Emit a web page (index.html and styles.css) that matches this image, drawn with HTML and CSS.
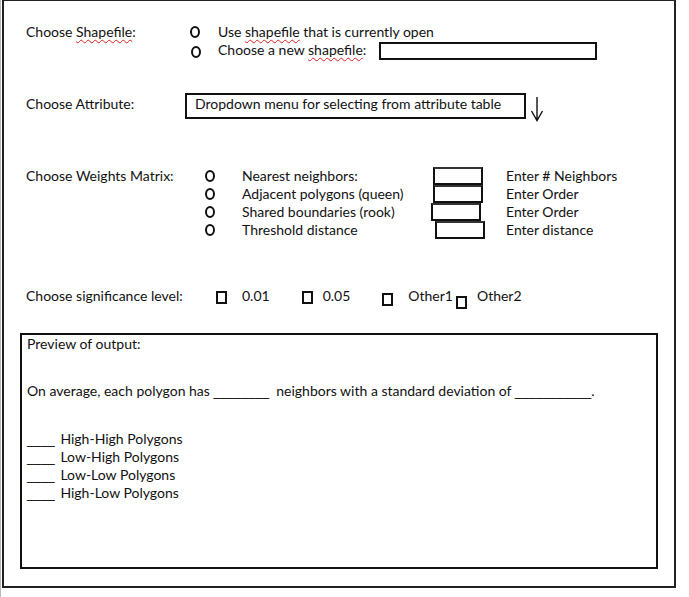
FILE: index.html
```html
<!DOCTYPE html>
<html>
<head>
<meta charset="utf-8">
<link rel="stylesheet" href="styles.css">
</head>
<body>
<div class="frame">
  <section class="shape">
    <div class="label">Choose <span class="sp">Shapefile</span>:</div>
    <div class="options">
      <div class="opt"><span class="radio"></span><span class="otext">Use <span class="sp">shapefile</span> that is currently open</span></div>
      <div class="opt opt2"><span class="radio"></span><span class="otext">Choose a new <span class="sp">shapefile</span>:</span><span class="field"></span></div>
    </div>
  </section>

  <section class="attr">
    <div class="label">Choose Attribute:</div>
    <div class="dropdown">Dropdown menu for selecting from attribute table</div>
    <svg class="arrow" width="14" height="26" viewBox="0 0 14 26"><path d="M7 1 V24 M1.5 15 L7 24.5 L12.5 15" fill="none" stroke="#111" stroke-width="1.4"/></svg>
  </section>

  <section class="weights">
    <div class="label">Choose Weights Matrix:</div>
    <span class="radio"></span><span>Nearest neighbors:</span><span class="box"></span><span>Enter # Neighbors</span>
    <div></div>
    <span class="radio"></span><span>Adjacent polygons (queen)</span><span class="box b2"></span><span>Enter Order</span>
    <div></div>
    <span class="radio"></span><span>Shared boundaries (rook)</span><span class="box b3"></span><span>Enter Order</span>
    <div></div>
    <span class="radio"></span><span>Threshold distance</span><span class="box b4"></span><span>Enter distance</span>
  </section>

  <section class="sig">
    <div class="label">Choose significance level:</div>
    <span class="check c1"></span><span class="val v1">0.01</span>
    <span class="check c2"></span><span class="val v2">0.05</span>
    <span class="check c3"></span><span class="val v3">Other1</span>
    <span class="check c4"></span><span class="val">Other2</span>
  </section>

  <section class="preview">
    <p class="ptitle">Preview of output:</p>
    <p class="avg">On average, each polygon has <span class="blank">________</span>&nbsp; neighbors with a standard deviation of <span class="blank">___________</span>.</p>
    <ul class="list">
      <li><span class="blank">____</span> High-High Polygons</li>
      <li><span class="blank">____</span> Low-High Polygons</li>
      <li><span class="blank">____</span> Low-Low Polygons</li>
      <li><span class="blank">____</span> High-Low Polygons</li>
    </ul>
  </section>
</div>
</body>
</html>
```
FILE: styles.css
```css
* { box-sizing: border-box; }
html, body { margin: 0; padding: 0; background: #fff; }
body {
  font-family: Lato, "Open Sans", sans-serif;
  font-size: 14px;
  line-height: 18px;
  color: #111;
  border-left: 1px solid #bbb;
  height: 597px;
}
.frame {
  margin-left: 1px;
  width: 674px;
  height: 588px;
  border: 2px solid #222;
  border-top-width: 1px;
  padding: 22px 0 0 22px;
}
.sp {
  text-decoration: underline wavy #e02020;
  text-decoration-thickness: 1px;
  text-underline-offset: 2px;
  text-decoration-skip-ink: none;
}
.blank {
  font-family: "Liberation Sans", Arial, sans-serif;
  font-size: 12.5px;
  line-height: 0;
  color: #000;
}
.list .blank { margin-right: 2px; }
.radio {
  display: inline-block;
  width: 10px;
  height: 12px;
  border: 2px solid #111;
  border-radius: 50%;
}
.shape { display: flex; }
.shape .label { width: 164px; }
.opt { display: flex; align-items: center; height: 18px; }
.opt .radio { margin-right: 18px; }
.opt2 .radio { margin-left: 1px; margin-right: 17px; margin-top: 4px; }
.field {
  width: 218px;
  height: 18px;
  border: 2px solid #111;
  margin-left: 13px;
  margin-top: 2px;
}

.attr { display: flex; align-items: flex-start; margin-top: 35px; }
.attr .label { width: 159px; margin-top: 1px; }
.dropdown {
  width: 341px;
  height: 26px;
  border: 2px solid #111;
  padding: 0 0 0 8px;
  line-height: 18px;
  margin-top: -1px;
}
.arrow { margin-left: 4px; margin-top: 2px; }

.weights {
  display: grid;
  grid-template-columns: 179px 37px 191px 73px auto;
  grid-auto-rows: 18px;
  align-items: center;
  margin-top: 45px;
}
.weights .label { grid-row: 1; }
.weights .radio { justify-self: start; }
.box {
  width: 50px;
  height: 18px;
  border: 2px solid #111;
  border-top-color: #333;
}
.b3 { margin-left: -2px; }
.b4 { margin-left: 2px; }

.sig { display: flex; align-items: flex-start; margin-top: 48px; height: 24px; }
.sig .label { width: 190px; }
.check {
  display: inline-block;
  width: 11px;
  height: 13px;
  border: 2px solid #111;
  margin-top: 4px;
}
.c1 { margin-right: 15px; }
.v1 { margin-right: 32px; }
.c2 { margin-right: 10px; }
.v2 { margin-right: 32px; }
.c3 { margin-top: 6px; margin-right: 15px; }
.v3 { margin-right: 3px; }
.c4 { margin-top: 9px; margin-right: 10px; }

.preview {
  margin-top: 22px;
  margin-left: -6px;
  width: 638px;
  height: 236px;
  border: 2px solid #111;
  padding: 0 0 0 5px;
}
.preview p { margin: 0; }
.avg { margin-top: 29px !important; }
.list { list-style: none; margin: 30px 0 0; padding: 0; }
.list li { height: 18px; }
```
